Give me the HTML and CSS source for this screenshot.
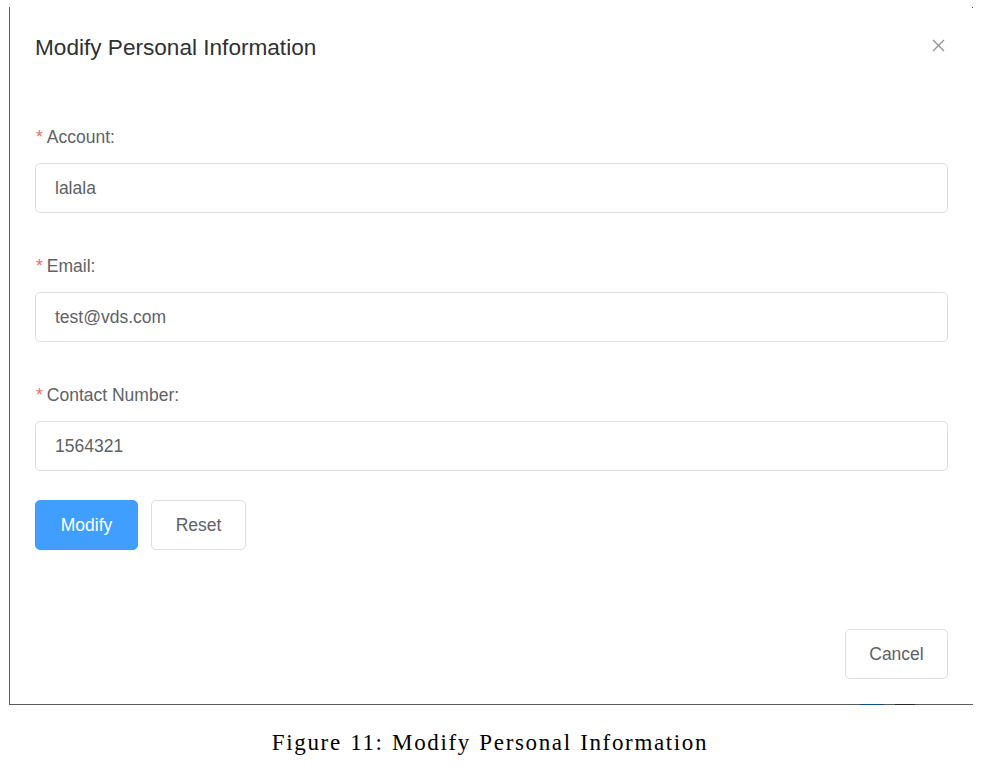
FILE: index.html
```html
<!DOCTYPE html>
<html lang="en">
<head>
<meta charset="utf-8">
<title>Modify Personal Information</title>
<link rel="stylesheet" href="styles.css">
</head>
<body>
<div class="frame">
  <span class="corner-dot"></span>
  <span class="peek-blue"></span>
  <span class="peek-gray"></span>
  <div class="dialog">
    <div class="dialog-header">
      <span class="dialog-title">Modify Personal Information</span>
      <span class="close-btn" aria-label="Close">
        <svg width="13" height="13" viewBox="0 0 13 13"><path d="M1 1L12 12M12 1L1 12" stroke="#909399" stroke-width="1.3" fill="none"/></svg>
      </span>
    </div>
    <div class="dialog-body">
      <div class="form-item">
        <label class="form-label"><span class="req">*</span>Account:</label>
        <div class="input">lalala</div>
      </div>
      <div class="form-item">
        <label class="form-label"><span class="req">*</span>Email:</label>
        <div class="input">test@vds.com</div>
      </div>
      <div class="form-item">
        <label class="form-label"><span class="req">*</span>Contact Number:</label>
        <div class="input">1564321</div>
      </div>
      <div class="form-actions">
        <button class="btn btn-primary btn-modify">Modify</button>
        <button class="btn btn-reset">Reset</button>
      </div>
    </div>
    <div class="dialog-footer">
      <button class="btn btn-cancel">Cancel</button>
    </div>
  </div>
</div>
<p class="caption">Figure 11: Modify Personal Information</p>
</body>
</html>
```
FILE: styles.css
```css
html, body {
  margin: 0;
  padding: 0;
  background: #ffffff;
}
body {
  font-family: "Liberation Sans", Arial, sans-serif;
}
.frame {
  position: relative;
  margin: 7px 0 0 9px;
  width: 963px;
  height: 697px;
  border-left: 1px solid #5a5a5a;
  border-bottom: 1px solid #5a5a5a;
}
.corner-dot {
  position: absolute;
  top: 0;
  right: 0;
  width: 1px;
  height: 1px;
  background: #444;
}
.peek-blue {
  position: absolute;
  bottom: -1px;
  left: 850px;
  width: 24px;
  height: 1px;
  background: #0b4f8f;
}
.peek-gray {
  position: absolute;
  bottom: -1px;
  left: 885px;
  width: 20px;
  height: 1px;
  background: #2a2a2a;
}
.dialog {
  display: flex;
  flex-direction: column;
  height: 100%;
  padding: 0 25px;
  box-sizing: border-box;
}
.dialog-header {
  display: flex;
  align-items: center;
  justify-content: space-between;
  padding-top: 26px;
  height: 30px;
}
.dialog-title {
  font-size: 22.6px;
  line-height: 30px;
  color: #303133;
}
.close-btn {
  display: flex;
  margin-right: 3px;
  margin-top: -6px;
}
.dialog-body {
  padding-top: 63px;
}
.form-item {
  margin-bottom: 42px;
}
.form-label {
  display: block;
  height: 22px;
  line-height: 22px;
  font-size: 17.5px;
  color: #606266;
  margin-bottom: 15px;
}
.req {
  color: #f56c6c;
  margin-right: 4px;
  margin-left: 1px;
}
.input {
  height: 50px;
  box-sizing: border-box;
  border: 1px solid #dcdfe6;
  border-radius: 5px;
  padding: 0 19px;
  line-height: 48px;
  font-size: 17.5px;
  color: #606266;
}
.form-actions {
  display: flex;
  gap: 13px;
  margin-top: -13px;
}
.btn {
  height: 50px;
  box-sizing: border-box;
  border-radius: 5px;
  border: 1px solid #dcdfe6;
  background: #ffffff;
  color: #606266;
  font-family: "Liberation Sans", Arial, sans-serif;
  font-size: 17.5px;
  padding: 0;
}
.btn-primary {
  background: #409eff;
  border-color: #409eff;
  color: #ffffff;
}
.btn-modify {
  width: 103px;
}
.btn-reset {
  width: 95px;
}
.dialog-footer {
  display: flex;
  justify-content: flex-end;
  margin-top: auto;
  padding-bottom: 25px;
}
.btn-cancel {
  width: 103px;
}
.caption {
  margin: 25px 0 0 0;
  text-align: center;
  font-family: "Liberation Serif", "Times New Roman", serif;
  font-size: 23px;
  letter-spacing: 1.65px;
  word-spacing: 1px;
  color: #000;
  padding-right: 4px;
}
```
